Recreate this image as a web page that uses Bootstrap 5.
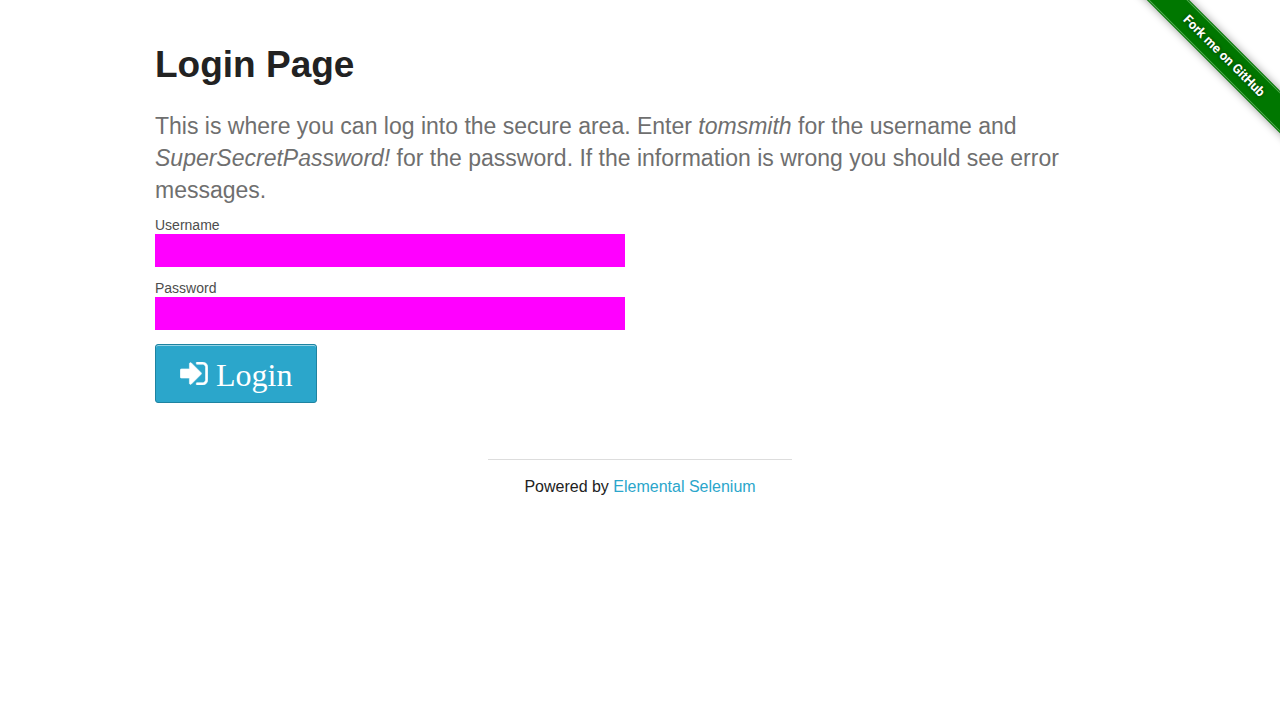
<!DOCTYPE html>
<html lang="en">
<head>
<meta charset="utf-8">
<meta name="viewport" content="width=device-width, initial-scale=1">
<title>The Internet</title>
<link href="https://cdn.jsdelivr.net/npm/bootstrap@5.3.0/dist/css/bootstrap.min.css" rel="stylesheet">
<style>
body { font-family: "Liberation Sans", Arial, sans-serif; color: #222; background: #fff; line-height: 24px; }
.page { max-width: 1000px; padding: 39px 15px 0; }
.page-title { font-size: 37px; line-height: 52px; font-weight: 700; margin-bottom: 19px; }
.intro { font-size: 23px; line-height: 32px; font-weight: 400; color: #6f6f6f; margin-bottom: 10px; }
.form-row { --bs-gutter-x: 30px; }
.field { margin-bottom: 12px; }
.field label { display: block; font-size: 14px; line-height: 18px; color: #4d4d4d; }
.field .form-control { height: 33px; background: #f0f; border: 0; border-radius: 0; font-size: 14px; }
.btn-login { margin-top: 2px; height: 59px; padding: 0 24px; gap: 8px; color: #fff; background: #2ba6cb;
  border: 1px solid #1e83a1; border-radius: 3px; box-shadow: 0 1px 0 rgba(255,255,255,.5) inset;
  font-family: "Liberation Serif", "Times New Roman", serif; font-size: 32px; line-height: 41px; }
.btn-login:hover, .btn-login:focus { color: #fff; background: #2284a1; border-color: #1e83a1; }
.credit { margin-top: 56px; }
.credit-inner { width: 304px; border-top: 1px solid #ddd; padding-top: 15px; }
.credit a { color: #2ba6cb; text-decoration: none; }
.ribbon-corner { width: 149px; height: 149px; overflow: hidden; pointer-events: none; }
.ribbon { width: 240px; height: 30px; top: 41px; left: -27px; transform: rotate(45deg); pointer-events: auto;
  background: #070; box-shadow: 0 0 8px rgba(0,0,0,.4); color: #fff; text-decoration: none;
  font: 700 13px/26px Roboto, sans-serif; text-shadow: 0 0 4px rgba(0,0,0,.6); padding: 1px 0; }
.ribbon span { display: block; border: 1px solid #5a5; border-width: 1px 0; }
</style>
</head>
<body>
<div class="ribbon-corner position-absolute top-0 end-0">
  <a class="ribbon position-absolute text-center" href="#"><span>Fork me on GitHub</span></a>
</div>
<main class="page container">
  <h2 class="page-title">Login Page</h2>
  <h4 class="intro">This is where you can log into the secure area. Enter <em>tomsmith</em> for the username and <em>SuperSecretPassword!</em> for the password. If the information is wrong you should see error messages.</h4>
  <form>
    <div class="row form-row">
      <div class="col-md-6 field">
        <label for="username">Username</label>
        <input class="form-control" type="text" id="username" name="username">
      </div>
    </div>
    <div class="row form-row">
      <div class="col-md-6 field">
        <label for="password">Password</label>
        <input class="form-control" type="password" id="password" name="password">
      </div>
    </div>
    <button class="btn btn-login d-inline-flex align-items-center" type="submit">
      <svg width="28" height="23" viewBox="0 192 1536 1280" fill="currentColor" stroke="currentColor" stroke-width="30" aria-hidden="true"><path d="M1184 832q0 26-19 45L621 1421q-19 19-45 19t-45-19-19-45v-288H64q-26 0-45-19T0 1024V640q0-26 19-45t45-19h448V288q0-26 19-45t45-19 45 19l544 544q19 19 19 45zm352-352v704q0 119-84.5 203.5T1248 1472H928q-13 0-22.5-9.5T896 1440q0-4-1-20t-.5-26.5 3-23.5 10-19.5 20.5-6.5h320q66 0 113-47t47-113V480q0-66-47-113t-113-47H936l-11.5-1-11.5-3-8-5.5-7-9-2-13.5q0-4-1-20t-.5-26.5 3-23.5 10-19.5T928 192h320q119 0 203.5 84.5T1536 480z"/></svg>
      <span class="pt-1">Login</span>
    </button>
  </form>
</main>
<footer class="credit d-flex justify-content-center">
  <div class="credit-inner text-center">Powered by <a href="#">Elemental Selenium</a></div>
</footer>
<script src="https://cdn.jsdelivr.net/npm/bootstrap@5.3.0/dist/js/bootstrap.bundle.min.js"></script>
</body>
</html>
